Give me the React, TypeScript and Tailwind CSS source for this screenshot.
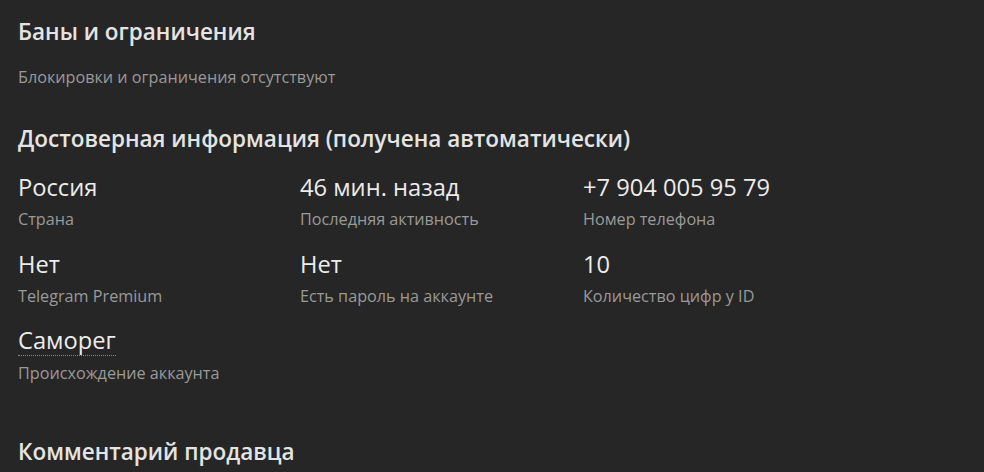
import React from 'react';

type Fact = { value: string; label: string; dotted?: boolean };

const facts: Fact[] = [
  { value: 'Россия', label: 'Страна' },
  { value: '46 мин. назад', label: 'Последняя активность' },
  { value: '+7 904 005 95 79', label: 'Номер телефона' },
  { value: 'Нет', label: 'Telegram Premium' },
  { value: 'Нет', label: 'Есть пароль на аккаунте' },
  { value: '10', label: 'Количество цифр у ID' },
  { value: 'Саморег', label: 'Происхождение аккаунта', dotted: true },
];

const Heading: React.FC<{ children: React.ReactNode; className?: string }> = ({ children, className = '' }) => (
  <h2 className={`text-[22.5px] leading-[30px] font-semibold text-[#e4e4e4] ${className}`}>{children}</h2>
);

const App: React.FC = () => {
  return (
    <div
      className="w-[984px] h-[472px] overflow-hidden bg-[#262626] pl-[18px] pt-[17px]"
      style={{ fontFamily: '"Open Sans", "Noto Sans", sans-serif' }}
    >
      <Heading>Баны и ограничения</Heading>
      <p className="mt-[19px] text-[16.2px] leading-[22px] text-[#9a9a9a]">
        Блокировки и ограничения отсутствуют
      </p>

      <Heading className="mt-[36px]">Достоверная информация (получена автоматически)</Heading>

      <div className="mt-[18px] grid grid-cols-[282px_283px_282px] gap-y-[18.5px]">
        {facts.map((f, i) => (
          <div key={i} className="flex flex-col items-start">
            <span
              className={`text-[23.7px] leading-[30px] text-[#ececec] ${
                f.dotted ? 'border-b border-dotted border-[#8a8a8a] leading-[29px]' : ''
              }`}
            >
              {f.value}
            </span>
            <span className="mt-[6px] text-[16.2px] leading-[22px] text-[#9a9a9a]">{f.label}</span>
          </div>
        ))}
      </div>

      <Heading className="mt-[53px]">Комментарий продавца</Heading>
    </div>
  );
};

export default App;
